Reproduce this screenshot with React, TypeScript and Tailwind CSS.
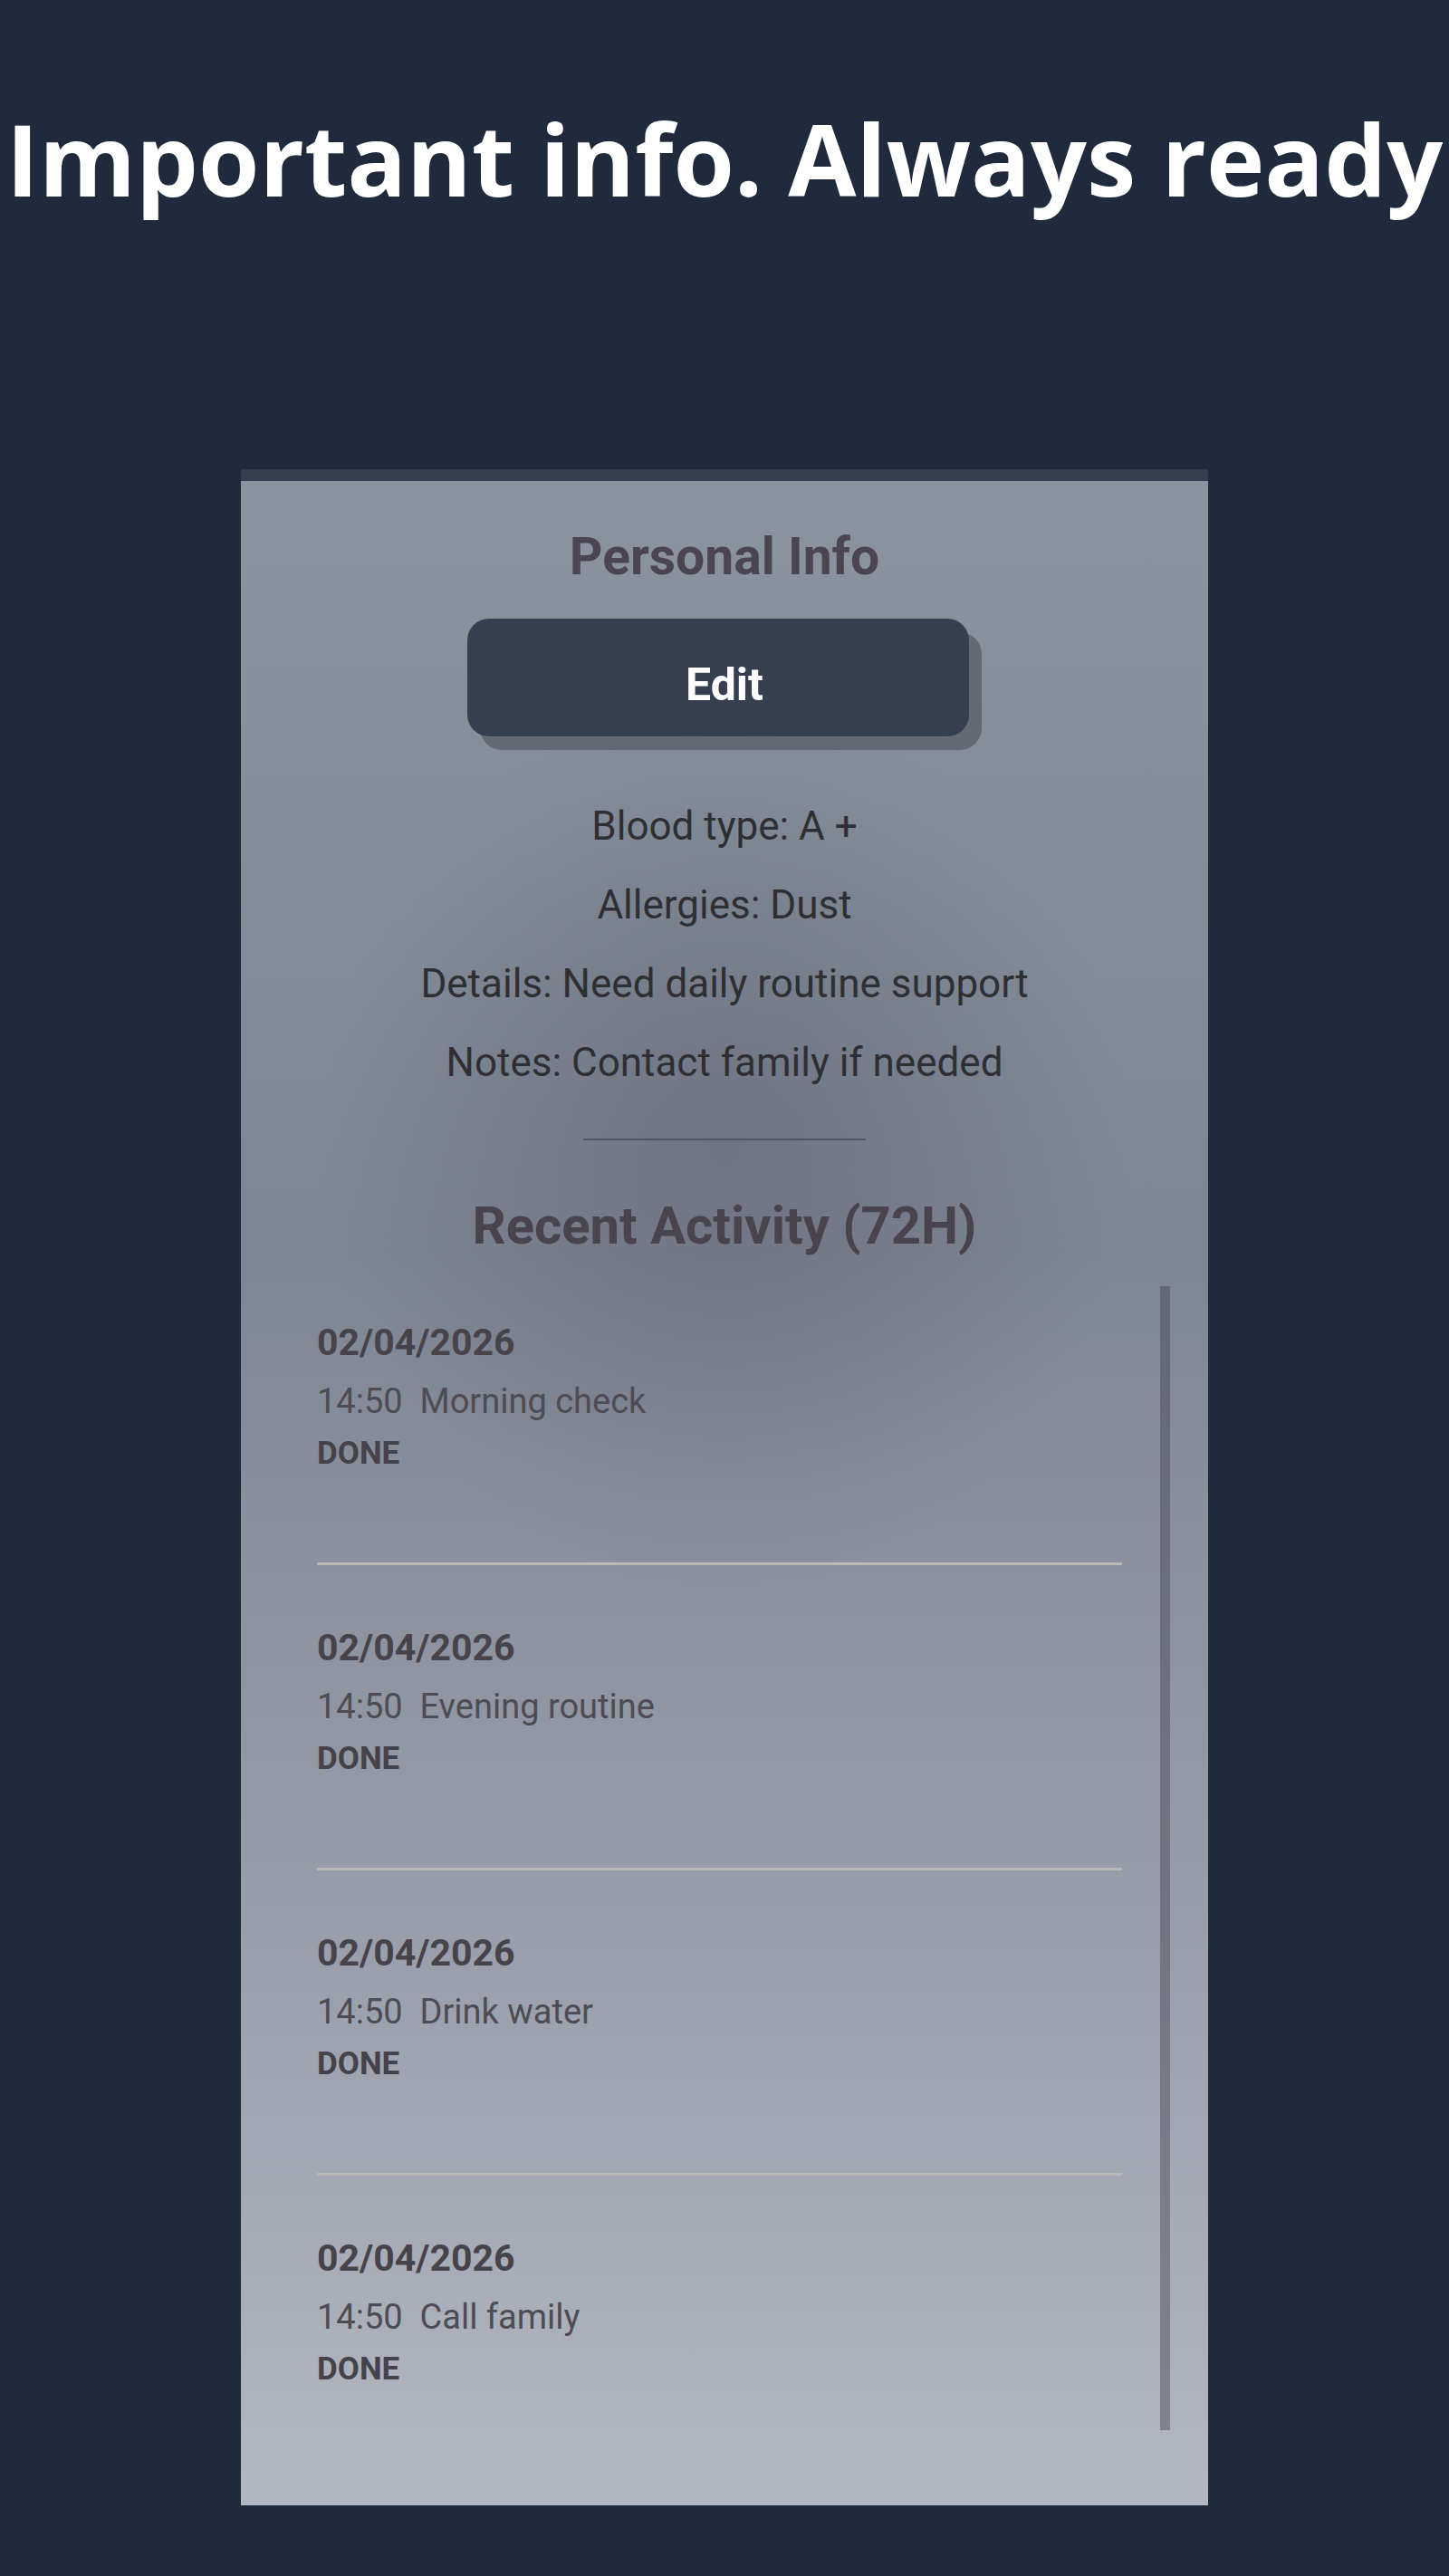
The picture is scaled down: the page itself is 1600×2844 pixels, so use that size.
import React from 'react';

const INFO_LINES = [
  'Blood type: A +',
  'Allergies: Dust',
  'Details: Need daily routine support',
  'Notes: Contact family if needed',
];

const ACTIVITY = [
  { date: '02/04/2026', time: '14:50', label: 'Morning check', status: 'DONE' },
  { date: '02/04/2026', time: '14:50', label: 'Evening routine', status: 'DONE' },
  { date: '02/04/2026', time: '14:50', label: 'Drink water', status: 'DONE' },
  { date: '02/04/2026', time: '14:50', label: 'Call family', status: 'DONE' },
];

const App: React.FC = () => {
  return (
    <div className="min-h-[2844px] w-full bg-[#1f2a3c] flex flex-col items-center">
      {/* headline */}
      <h1 className="pt-[120px] text-[109px] leading-[109px] font-bold text-white whitespace-nowrap font-['Open_Sans',sans-serif]">
        Important info. Always ready
      </h1>

      {/* phone frame */}
      <div className="mt-[289px] w-[1068px] h-[2248px] flex flex-col overflow-hidden font-['Roboto',sans-serif]">
        <div className="h-[13px] bg-[#343e4e]" />
        <div className="flex-1 flex flex-col items-center bg-[radial-gradient(ellipse_42%_22%_at_50%_33%,rgba(92,97,112,0.5),transparent),linear-gradient(180deg,#8b939f_0%,#7f8693_38%,#959ba7_68%,#b2b7c1_100%)]">
          <h2 className="pt-[52px] text-[57px] leading-[64px] font-bold text-[#4a4550]">
            Personal Info
          </h2>

          <div className="mt-[36px] w-[568px]">
            <button className="w-[554px] h-[130px] pl-[14px] pt-[16px] rounded-[24px] bg-[#353f4f] text-white text-[50px] font-bold shadow-[14px_15px_0_0_rgba(0,0,0,0.26)]">
              Edit
            </button>
          </div>

          <div className="mt-[56px] flex flex-col items-center">
            {INFO_LINES.map((line) => (
              <p key={line} className="text-[44px] leading-[87px] text-[#2e2f33]">
                {line}
              </p>
            ))}
          </div>

          <div className="mt-[40px] w-[312px] h-[2px] bg-[#4f5664]" />

          <h2 className="mt-[62px] text-[58px] leading-[64px] font-bold text-[#48434c]">
            Recent Activity (72H)
          </h2>

          {/* activity list + scrollbar */}
          <div className="mt-[35px] w-full h-[1263px] pl-[84px] pr-[42px] flex">
            <div className="flex-1 mr-[42px] pt-[38px] overflow-hidden">
              {ACTIVITY.map((item, i) => (
                <div key={i}>
                  {i > 0 && <div className="mt-[100px] mb-[67px] h-[3px] bg-[#b9b8b6]" />}
                  <div className="text-[41px] leading-[48px] font-bold text-[#47434b]">{item.date}</div>
                  <div className="mt-[18px] text-[38px] leading-[46px] text-[#4d4c55] whitespace-pre">
                    {item.time}  {item.label}
                  </div>
                  <div className="mt-[15px] text-[35px] leading-[40px] font-bold text-[#45424a]">{item.status}</div>
                </div>
              ))}
            </div>
            <div className="w-[11px] h-full bg-[rgba(60,58,70,0.4)]" />
          </div>
        </div>
      </div>
    </div>
  );
};

export default App;
